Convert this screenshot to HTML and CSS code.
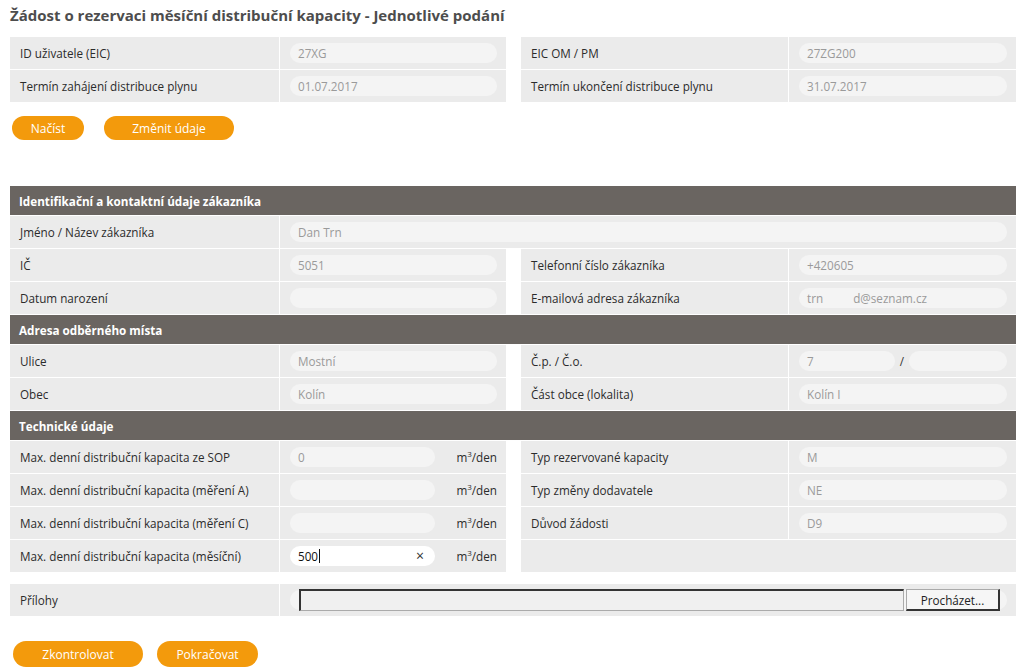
FILE: index.html
```html
<!DOCTYPE html>
<html lang="cs">
<head>
<meta charset="utf-8">
<title>Žádost o rezervaci</title>
<link rel="stylesheet" href="styles.css">
</head>
<body>
<div class="page">
  <h1 class="title">Žádost o rezervaci měsíční distribuční kapacity - Jednotlivé podání</h1>

  <div class="cols top">
    <div class="half left">
      <div class="row"><div class="lbl">ID uživatele (EIC)</div><div class="val"><span class="inp">27XG</span></div></div>
      <div class="row"><div class="lbl">Termín zahájení distribuce plynu</div><div class="val"><span class="inp">01.07.2017</span></div></div>
    </div>
    <div class="half right">
      <div class="row"><div class="lbl">EIC OM / PM</div><div class="val"><span class="inp">27ZG200</span></div></div>
      <div class="row"><div class="lbl">Termín ukončení distribuce plynu</div><div class="val"><span class="inp">31.07.2017</span></div></div>
    </div>
  </div>

  <div class="btns first">
    <span class="btn b-nacist">Načíst</span>
    <span class="btn b-zmenit">Změnit údaje</span>
  </div>

  <div class="section s-ident">
    <div class="head">Identifikační a kontaktní údaje zákazníka</div>
    <div class="row full"><div class="lbl">Jméno / Název zákazníka</div><div class="val"><span class="inp">Dan Trn</span></div></div>
    <div class="cols">
      <div class="half left">
        <div class="row"><div class="lbl">IČ</div><div class="val"><span class="inp">5051</span></div></div>
        <div class="row"><div class="lbl">Datum narození</div><div class="val"><span class="inp"></span></div></div>
      </div>
      <div class="half right">
        <div class="row"><div class="lbl">Telefonní číslo zákazníka</div><div class="val"><span class="inp">+420605</span></div></div>
        <div class="row"><div class="lbl">E-mailová adresa zákazníka</div><div class="val"><span class="inp">trn<span class="gap"></span>d@seznam.cz</span></div></div>
      </div>
    </div>
    <div class="head">Adresa odběrného místa</div>
    <div class="cols">
      <div class="half left">
        <div class="row"><div class="lbl">Ulice</div><div class="val"><span class="inp">Mostní</span></div></div>
        <div class="row"><div class="lbl">Obec</div><div class="val"><span class="inp">Kolín</span></div></div>
      </div>
      <div class="half right">
        <div class="row"><div class="lbl">Č.p. / Č.o.</div><div class="val split"><span class="inp short">7</span><span class="slash">/</span><span class="inp short"></span></div></div>
        <div class="row"><div class="lbl">Část obce (lokalita)</div><div class="val"><span class="inp">Kolín I</span></div></div>
      </div>
    </div>
    <div class="head">Technické údaje</div>
    <div class="cols">
      <div class="half left">
        <div class="row"><div class="lbl">Max. denní distribuční kapacita ze SOP</div><div class="val unit"><span class="inp">0</span><span class="u">m<sup>3</sup>/den</span></div></div>
        <div class="row"><div class="lbl">Max. denní distribuční kapacita (měření A)</div><div class="val unit"><span class="inp"></span><span class="u">m<sup>3</sup>/den</span></div></div>
        <div class="row"><div class="lbl">Max. denní distribuční kapacita (měření C)</div><div class="val unit"><span class="inp"></span><span class="u">m<sup>3</sup>/den</span></div></div>
        <div class="row"><div class="lbl">Max. denní distribuční kapacita (měsíční)</div><div class="val unit"><span class="inp active">500<span class="caret"></span><span class="clear">×</span></span><span class="u">m<sup>3</sup>/den</span></div></div>
      </div>
      <div class="half right">
        <div class="row"><div class="lbl">Typ rezervované kapacity</div><div class="val"><span class="inp">M</span></div></div>
        <div class="row"><div class="lbl">Typ změny dodavatele</div><div class="val"><span class="inp">NE</span></div></div>
        <div class="row"><div class="lbl">Důvod žádosti</div><div class="val"><span class="inp">D9</span></div></div>
        <div class="row"><div class="filler"></div></div>
      </div>
    </div>
  </div>

  <div class="row full attach">
    <div class="lbl">Přílohy</div>
    <div class="val"><span class="inp file"><span class="filebox"></span><span class="browse">Procházet...</span></span></div>
  </div>

  <div class="btns last">
    <span class="btn b-zkon">Zkontrolovat</span>
    <span class="btn b-pokr">Pokračovat</span>
  </div>
</div>
</body>
</html>
```
FILE: styles.css
```css
* { box-sizing: border-box; }
html, body { margin: 0; padding: 0; background: #fff; }
body {
  font-family: "Open Sans", "Noto Sans", "DejaVu Sans", sans-serif;
  font-size: 11.7px;
  color: #2b2b2b;
}
.page {
  width: 1006px;
  margin-left: 10px;
  padding-top: 5px;
}
.title {
  margin: 0;
  font-size: 15px;
  font-weight: 700;
  color: #4d4d4d;
  line-height: 20px;
  height: 32px;
}
.cols {
  display: flex;
  gap: 15px;
}
.half {
  display: flex;
  flex-direction: column;
  gap: 1px;
}
.half.left { width: 496px; }
.half.right { width: 495px; }
.row {
  display: flex;
  gap: 1px;
  height: 32px;
}
.lbl {
  width: 269px;
  flex: none;
  background: #ebebeb;
  padding-left: 10px;
  display: flex;
  align-items: center;
}
.half.right .lbl { width: 267px; }
.val {
  flex: 1;
  background: #ebebeb;
  padding: 0 9px 0 10px;
  display: flex;
  align-items: center;
}
.filler { flex: 1; background: #ebebeb; }
.inp {
  flex: 1;
  height: 20px;
  border-radius: 10px;
  background: #f4f4f4;
  color: #9a9a9a;
  padding-left: 8px;
  display: flex;
  align-items: center;
  position: relative;
}
.inp .gap { display: inline-block; width: 30px; }
.val.split { gap: 0; }
.val.split .inp.short { flex: none; width: 96px; }
.val.split .slash { width: 14px; text-align: center; color: #333; }
.val.split .inp.short:last-child { flex: 1; }
.val.unit .inp { flex: none; width: 145px; }
.val.unit .u { flex: 1; text-align: right; color: #2b2b2b; }
.u sup { font-size: 8px; line-height: 0; }
.inp.active { background: #fff; color: #111; }
.caret { display: inline-block; width: 1px; height: 14px; background: #111; margin-left: 1px; }
.clear { position: absolute; right: 11px; top: 1px; font-size: 14px; line-height: 17px; color: #333; }

.btns { display: flex; gap: 20px; }
.btn {
  background: #f39a0c;
  color: #fff;
  border-radius: 12px;
  height: 24px;
  display: flex;
  align-items: center;
  justify-content: center;
  font-size: 12px;
}
.btns.first { margin-top: 14px; margin-left: 2px; }
.b-nacist { width: 72px; }
.b-zmenit { width: 130px; }
.s-ident { margin-top: 46px; display: flex; flex-direction: column; gap: 1px; }
.head {
  height: 29px;
  background: #6a6561;
  color: #fff;
  font-weight: 700;
  padding-left: 9px;
  display: flex;
  align-items: center;
}
.full .val .inp { flex: 1; }
.attach { margin-top: 12px; }
.attach .val { padding-right: 9px; }
.inp.file { padding-left: 9px; gap: 2px; }
.filebox {
  flex: none;
  width: 605px;
  height: 22px;
  border: 1px solid #aaa;
  border-top: 2px solid #333;
  border-left: 2px solid #333;
  background: #f0f0f0;
}
.browse {
  flex: none;
  width: 94px;
  height: 22px;
  border: 1px solid #aaa;
  border-right: 2px solid #333;
  border-bottom: 2px solid #333;
  background: #f6f6f6;
  color: #222;
  display: flex;
  align-items: center;
  justify-content: center;
}
.btns.last { margin-top: 25px; margin-left: 3px; gap: 14px; }
.b-zkon { width: 130px; height: 26px; border-radius: 13px; }
.b-pokr { width: 101px; height: 26px; border-radius: 13px; }
```
